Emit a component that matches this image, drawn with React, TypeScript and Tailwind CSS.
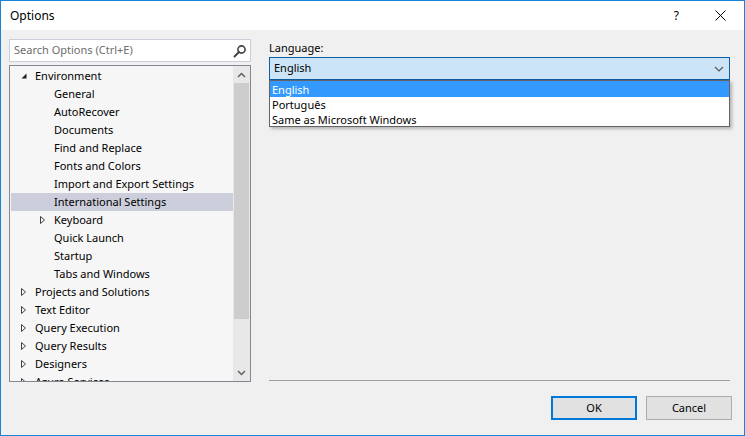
import React from 'react';

type Row = { label: string; level: number; state?: 'open' | 'closed'; selected?: boolean };

const rows: Row[] = [
  { label: 'Environment', level: 0, state: 'open' },
  { label: 'General', level: 1 },
  { label: 'AutoRecover', level: 1 },
  { label: 'Documents', level: 1 },
  { label: 'Find and Replace', level: 1 },
  { label: 'Fonts and Colors', level: 1 },
  { label: 'Import and Export Settings', level: 1 },
  { label: 'International Settings', level: 1, selected: true },
  { label: 'Keyboard', level: 1, state: 'closed' },
  { label: 'Quick Launch', level: 1 },
  { label: 'Startup', level: 1 },
  { label: 'Tabs and Windows', level: 1 },
  { label: 'Projects and Solutions', level: 0, state: 'closed' },
  { label: 'Text Editor', level: 0, state: 'closed' },
  { label: 'Query Execution', level: 0, state: 'closed' },
  { label: 'Query Results', level: 0, state: 'closed' },
  { label: 'Designers', level: 0, state: 'closed' },
  { label: 'Azure Services', level: 0, state: 'closed' },
];

function Expander({ state }: { state?: 'open' | 'closed' }) {
  if (state === 'open') {
    return (
      <svg width="8" height="8" viewBox="0 0 8 8">
        <path d="M6.5 1.5 L6.5 6.5 L1.5 6.5 Z" fill="#1e1e1e" />
      </svg>
    );
  }
  if (state === 'closed') {
    return (
      <svg width="8" height="10" viewBox="0 0 8 10">
        <path d="M1.5 1.5 L5.5 5 L1.5 8.5 Z" fill="none" stroke="#404040" strokeWidth="1" />
      </svg>
    );
  }
  return null;
}

function TreeRow({ row }: { row: Row }) {
  return (
    <div
      className={`flex h-[18px] items-center ${row.selected ? 'bg-[#cccedb]' : ''}`}
      style={{ paddingLeft: row.level === 0 ? 9 : 28 }}
    >
      <span className="flex w-[15px] items-center">
        <Expander state={row.state} />
      </span>
      <span className="whitespace-nowrap">{row.label}</span>
    </div>
  );
}

export default function App() {
  return (
    <div
      className="flex h-[436px] w-[745px] flex-col overflow-hidden border border-[#1883d7] bg-[#f0f0f0] text-[11px] text-black"
      style={{ fontFamily: '"Noto Sans", "Open Sans", sans-serif' }}
    >
      {/* Title bar */}
      <div className="flex h-[29px] shrink-0 items-center bg-white pl-[9px]">
        <span className="text-[12px]">Options</span>
        <span className="ml-auto mr-[36px] text-[12px]">?</span>
        <svg width="11" height="11" viewBox="0 0 11 11" className="mr-[18px]">
          <path d="M0.5 0.5 L10.5 10.5 M10.5 0.5 L0.5 10.5" stroke="#000" strokeWidth="1" />
        </svg>
      </div>

      {/* Body */}
      <div className="flex flex-1">
        {/* Left column */}
        <div className="flex w-[250px] shrink-0 flex-col pl-[8px] pt-[9px]">
          <div className="flex h-[23px] items-center border border-[#cccedb] bg-white pl-[4px] pr-[3px]">
            <span className="text-[#6d6d6d]">Search Options (Ctrl+E)</span>
            <svg width="14" height="14" viewBox="0 0 14 14" className="ml-auto">
              <circle cx="8.5" cy="5.5" r="3.6" fill="none" stroke="#424242" strokeWidth="1.6" />
              <path d="M6 8 L1.5 12.5" stroke="#424242" strokeWidth="2" strokeLinecap="round" />
            </svg>
          </div>
          <div className="relative mt-[3px] flex h-[317px] border border-[#828790] bg-[#f6f6f6]">
            <div className="flex-1 overflow-hidden pl-[1px] pt-[1px]">
              {rows.map((r) => (
                <TreeRow key={r.label} row={r} />
              ))}
            </div>
            {/* Scrollbar */}
            <div className="flex w-[17px] shrink-0 flex-col bg-[#e8e8e8]">
              <div className="flex h-[17px] items-center justify-center">
                <svg width="9" height="6" viewBox="0 0 9 6">
                  <path d="M1 5 L4.5 1.5 L8 5" fill="none" stroke="#606060" strokeWidth="1.5" />
                </svg>
              </div>
              <div className="mx-[1px] h-[236px] bg-[#cdcdcd]" />
              <div className="flex-1" />
              <div className="flex h-[17px] items-center justify-center">
                <svg width="9" height="6" viewBox="0 0 9 6">
                  <path d="M1 1 L4.5 4.5 L8 1" fill="none" stroke="#606060" strokeWidth="1.5" />
                </svg>
              </div>
            </div>
          </div>
        </div>

        {/* Right column */}
        <div className="flex flex-1 flex-col pl-[18px] pr-[14px]">
          <div className="mt-[9px] h-[18px] leading-[18px]">Language:</div>
          <div className="relative">
            <div className="flex h-[23px] items-center border border-[#0d5ea6] bg-[#cce4f7] pl-[4px] pr-[4px]">
              <span>English</span>
              <svg width="10" height="6" viewBox="0 0 10 6" className="ml-auto mr-[1px]">
                <path d="M1 1 L5 5 L9 1" fill="none" stroke="#5a5a5a" strokeWidth="1.2" />
              </svg>
            </div>
            <div className="absolute left-0 right-0 top-[23px] z-10 border border-[#646464] bg-white shadow-[2px_2px_3px_rgba(0,0,0,0.25)]">
              <div className="h-[16px] bg-[#3399ff] pl-[2px] pt-[2px] leading-[13px] text-white">English</div>
              <div className="h-[15px] pl-[2px] pt-[1px] leading-[13px]">Português</div>
              <div className="h-[14px] pl-[2px] pt-[1px] leading-[13px]">Same as Microsoft Windows</div>
            </div>
          </div>
          <div className="flex-1" />
          <div className="h-px bg-[#a0a0a0]" />
          <div className="flex justify-end gap-[9px] pb-[15px] pt-[15px]">
            <button className="h-[24px] w-[86px] border-2 border-[#0078d7] bg-[#e1e1e1]">OK</button>
            <button className="mr-[-2px] h-[24px] w-[86px] border border-[#adadad] bg-[#e1e1e1]">Cancel</button>
          </div>
        </div>
      </div>
    </div>
  );
}
